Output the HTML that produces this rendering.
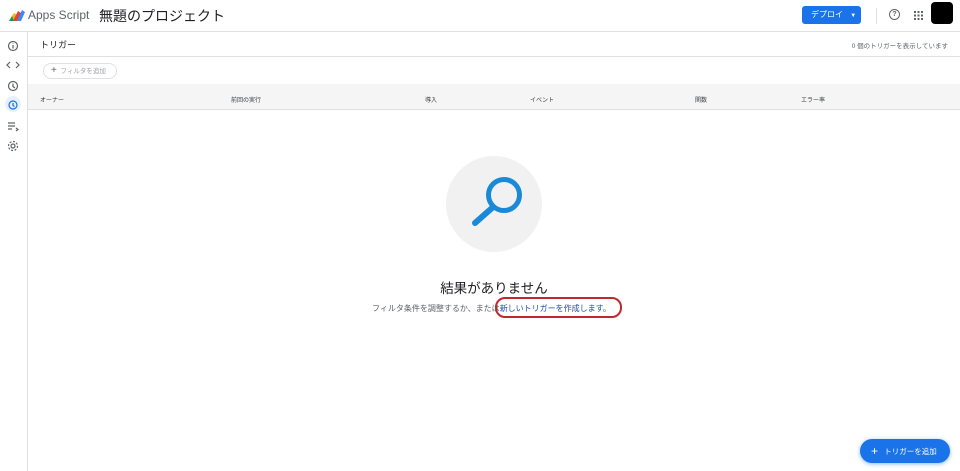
<!DOCTYPE html>
<html><head><meta charset="utf-8"><style>
*{margin:0;padding:0;box-sizing:border-box}
body{width:960px;height:471px;overflow:hidden;background:#fff;font-family:"Liberation Sans","Noto Sans CJK JP",sans-serif;color:#202124;position:relative}
.abs{position:absolute}
.hdr{left:0;top:0;width:960px;height:32px;border-bottom:1px solid #e0e0e0}
.side{left:0;top:32px;width:28px;height:439px;border-right:1px solid #e0e0e0}
.th{font-size:6px;color:#3c4043;top:95px}
</style></head><body>
<div class="abs hdr"></div>
<svg class="abs" style="left:8px;top:8px" width="18" height="14" viewBox="0 0 18 14">
<path d="M1 13 L6 5 L9 7 L6 13Z" fill="#f4b400"/><path d="M5 13 L10 3 L13 5 L9 13Z" fill="#db4437"/><path d="M9 13 L14 2 L17 4 L13 13Z" fill="#4285f4"/><path d="M1 13 L4 8 L6 13Z" fill="#0f9d58"/></svg>
<div class="abs" style="left:28px;top:8px;font-size:12px;color:#5f6368">Apps Script</div>
<div class="abs" style="left:99px;top:6px;font-size:14px;color:#202124">無題のプロジェクト</div>
<div class="abs" style="left:802px;top:6px;width:59px;height:18px;background:#1a73e8;border-radius:3px;color:#fff;font-size:8px;line-height:18px;padding-left:9px">デプロイ <span style="margin-left:5px;font-size:6px">▼</span></div>
<div class="abs" style="left:876px;top:8px;width:1px;height:16px;background:#e0e0e0"></div>
<div class="abs" style="left:889px;top:9px;width:11px;height:11px;border:1.3px solid #5f6368;border-radius:50%;font-size:7px;line-height:9px;text-align:center;color:#5f6368;font-weight:bold">?</div>
<svg class="abs" style="left:914px;top:11px" width="9" height="9"><g fill="#5f6368"><rect x="0" y="0" width="2" height="2"/><rect x="3.5" y="0" width="2" height="2"/><rect x="7" y="0" width="2" height="2"/><rect x="0" y="3.5" width="2" height="2"/><rect x="3.5" y="3.5" width="2" height="2"/><rect x="7" y="3.5" width="2" height="2"/><rect x="0" y="7" width="2" height="2"/><rect x="3.5" y="7" width="2" height="2"/><rect x="7" y="7" width="2" height="2"/></g></svg>
<div class="abs" style="left:931px;top:2px;width:22px;height:22px;background:#000;border-radius:4px"></div>
<div class="abs side"></div>
<svg class="abs" style="left:5px;top:38px" width="16" height="120" viewBox="0 0 16 120" fill="none" stroke="#5f6368" stroke-width="1.2">
<circle cx="8" cy="8" r="4.5"/><path d="M8 7v3.5M8 5.5v.5"/>
<path d="M5 24l-3 3 3 3M11 24l3 3-3 3"/>
<circle cx="8" cy="48" r="4.5"/><path d="M8 45.5v3l2 1.5"/>
<rect x="0" y="58" width="16" height="16" rx="8" fill="#e8f0fe" stroke="none"/><circle cx="8" cy="67" r="4" stroke="#1a73e8"/><path d="M8 65v2.5l1.5 1" stroke="#1a73e8"/>
<path d="M3 85h7M3 88h7M3 91h4M11 90l2 1.5-2 1.5"/>
<circle cx="8" cy="108" r="2"/><circle cx="8" cy="108" r="4.5" stroke-dasharray="2 1.5"/>
</svg>
<div class="abs" style="left:40px;top:38px;font-size:9px">トリガー</div>
<div class="abs" style="right:12px;top:40px;font-size:6.5px;color:#5f6368">0 個のトリガーを表示しています</div>
<div class="abs" style="left:28px;top:56px;width:932px;height:1px;background:#e0e0e0"></div>
<div class="abs" style="left:43px;top:63px;width:74px;height:16px;border:1px solid #e0e0e0;border-radius:8px;font-size:6.5px;color:#9aa0a6;line-height:14px;padding-left:7px"><span style="font-size:10px;color:#5f6368">+</span>&nbsp; フィルタを追加</div>
<div class="abs" style="left:28px;top:84px;width:932px;height:26px;background:#f5f5f5;border-bottom:1px solid #e0e0e0"></div>
<div class="abs th" style="left:40px">オーナー</div>
<div class="abs th" style="left:231px">前回の実行</div>
<div class="abs th" style="left:425px">導入</div>
<div class="abs th" style="left:530px">イベント</div>
<div class="abs th" style="left:695px">関数</div>
<div class="abs th" style="left:801px">エラー率</div>
<div class="abs" style="left:446px;top:156px;width:96px;height:96px;border-radius:50%;background:#f1f1f1"></div>
<svg class="abs" style="left:466px;top:175px" width="60" height="55" viewBox="0 0 60 55"><circle cx="38" cy="20" r="15.5" fill="none" stroke="#1a8ad8" stroke-width="5"/><path d="M26 33L9 48" stroke="#1a8ad8" stroke-width="6" stroke-linecap="round"/></svg>
<div class="abs" style="left:0;width:988px;top:277px;text-align:center;font-size:13.5px;color:#202124">結果がありません</div>
<div class="abs" style="left:372px;top:303px;font-size:8px;color:#5f6368;white-space:nowrap">フィルタ条件を調整するか、または<span style="color:#1a4fa0">新しいトリガーを作成します。</span></div>
<div class="abs" style="left:495px;top:297px;width:127px;height:21px;border:2px solid #c0282d;border-radius:10px"></div>
<div class="abs" style="left:860px;top:439px;width:90px;height:24px;background:#1a73e8;border-radius:12px;color:#fff;font-size:7.5px;line-height:24px;padding-left:11px;box-shadow:0 1px 4px rgba(26,115,232,.5)"><span style="font-size:12px;vertical-align:-1px">+</span>&nbsp;&nbsp; トリガーを追加</div>
</body></html>
